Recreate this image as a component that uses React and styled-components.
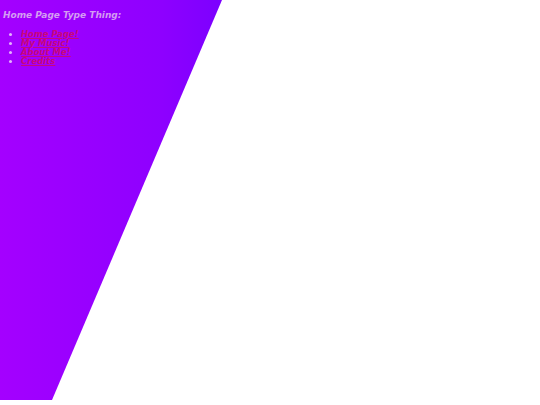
import React from "react"
import styled, { createGlobalStyle } from "styled-components"

const GlobalStyle = createGlobalStyle`
  html, body {
    margin: 0;
    padding: 0;
    background: #ffffff;
  }
`

const Backdrop = styled.div`
  width: 540px;
  height: 400px;
  background: linear-gradient(90deg, #a400ff 0%, #8e00ff 30%, #7c00ff 41%);
  clip-path: polygon(0 0, 222px 0, 52px 100%, 0 100%);
  padding: 10px 3px 0;
  box-sizing: border-box;
  font-family: "DejaVu Sans", Verdana, sans-serif;
`

const Title = styled.h1`
  margin: 0 0 9px;
  font-size: 9px;
  line-height: 11px;
  font-weight: bold;
  font-style: italic;
  color: #d49cf2;
`

const NavList = styled.ul`
  margin: 0;
  padding-left: 18px;
  color: #e4b0ff;
  font-size: 8.5px;
  line-height: 9px;
`

const NavLink = styled.a`
  color: #c8087c;
  font-weight: bold;
  font-style: italic;
  text-decoration: underline;
`

const links = ["Home Page!", "My Music!", "About Me!", "Credits"]

const App = () => (
  <>
    <GlobalStyle />
    <Backdrop>
      <Title>Home Page Type Thing:</Title>
      <NavList>
        {links.map(l => (
          <li key={l}>
            <NavLink href="#">{l}</NavLink>
          </li>
        ))}
      </NavList>
    </Backdrop>
  </>
)

export default App
